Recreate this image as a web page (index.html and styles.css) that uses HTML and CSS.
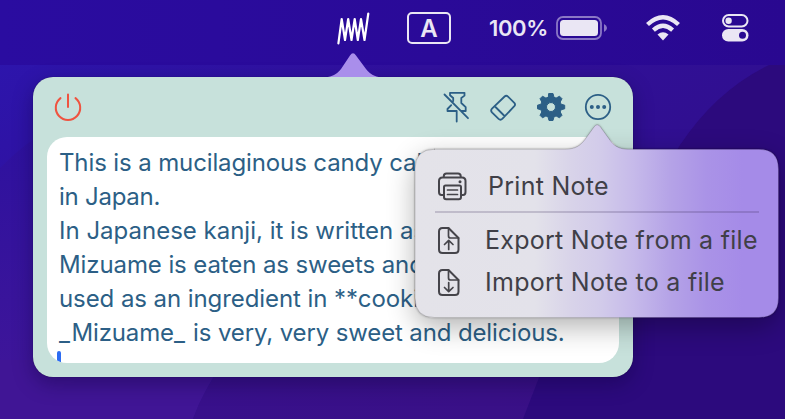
FILE: index.html
```html
<!DOCTYPE html>
<html lang="en">
<head>
<meta charset="utf-8">
<title>Mizuame</title>
<link rel="stylesheet" href="styles.css">
</head>
<body>
<svg class="wallpaper" viewBox="0 0 785 419" preserveAspectRatio="none">
  <defs>
    <linearGradient id="base" x1="0" y1="0" x2="1" y2="1"><stop offset="0" stop-color="#2c16b0"/><stop offset=".35" stop-color="#30109c"/><stop offset=".6" stop-color="#300f90"/><stop offset="1" stop-color="#2a087a"/></linearGradient>
    <linearGradient id="low" x1="0" y1="0" x2="0" y2="1"><stop offset="0" stop-color="#2d119f"/><stop offset="1" stop-color="#411698"/></linearGradient>
    <linearGradient id="dark" x1="0" y1="0" x2="1" y2="0"><stop offset="0" stop-color="#38108b"/><stop offset="1" stop-color="#3a1083"/></linearGradient>
  </defs>
  <rect width="785" height="419" fill="url(#base)"/>
  <path d="M0 168Q22 145 55 125V419H0Z" fill="url(#low)"/>
  <path d="M0 360H225Q206 385 193 419H0Z" fill="#401595"/>
  <path d="M220 370H785V419H193Q203 390 220 370Z" fill="url(#dark)"/>
  <path d="M785 58Q722 82 680 145Q620 245 540 375L523 419H785Z" fill="#2c0a7d"/>
</svg>
<header class="menubar">
  <svg class="mark" viewBox="336 11 34 34"><path d="M338.4 43.3 341.7 19 345 40 348.2 19 351.5 40 354.7 19 357.8 40 361 19 364.5 40 368.3 13.5"/></svg>
  <span class="input">A</span>
  <span class="percent">100%</span>
  <svg class="battery" viewBox="556 15 52 26"><rect x="557" y="17" width="44" height="22" rx="6" class="shell"/><rect x="560" y="20" width="38" height="16" rx="3.5" class="fill"/><path d="M604 24Q607 25.5 607 28T604 32Z" class="nub"/></svg>
  <svg class="wifi" viewBox="645 14 36 28"><path d="M647.500 24.500Q663 10 678.500 24.500M653.400 30.200Q663 21.500 672.600 30.200" /><path class="dot" d="M657.500 34.500Q663 30 668.500 34.500L663 40.500Z"/></svg>
  <svg class="control" viewBox="722 14 27 28"><rect x="723" y="15" width="24.500" height="11.500" rx="5.750" class="ring"/><circle cx="728.600" cy="20.800" r="3.200" class="fill"/><rect x="722" y="29" width="26.500" height="12.500" rx="6.250" class="fill"/><circle cx="742.500" cy="35.300" r="3.500" class="hole"/></svg>
</header>
<main class="note">
  <svg class="pointer" viewBox="323 53 60 25"><path d="M323 77.500C333 77 337 74 341 69L350 55.500Q353 51 356 55.500L366 69C370 74 374 77 383 77.500V78H323Z"/></svg>
  <div class="toolbar">
    <svg class="power" viewBox="54 93 28 28"><path d="M60.500 98.100A12.200 12.200 0 1 0 75.500 98.100M68 94.500V107"/></svg>
    <div class="tools">
      <svg class="tool" viewBox="442 91 30 32"><path d="M450 92.800H464.500V95.600L461.300 98V103L465.700 107.200V111H461M450 92.800V95.200L453.200 98V101M451.200 105.200 447.500 109V111H456.700M456.700 111V121.500M444.500 94.500 468 118.200"/></svg>
      <svg class="tool" viewBox="489 92 30 30"><path d="M492 108.600 504.600 96.500Q506.300 95 508 96.600L514.300 102.900Q515.800 104.500 514.300 106.200L502.500 118.700Q500.500 120.700 498.600 118.900L492.200 112.600Q490.200 110.500 492 108.600ZM495 106.500 504.500 116"/></svg>
      <svg class="tool gear" viewBox="536 93 30 30"><path fill-rule="evenodd" d="M549 94.500H553L554 98.300L556.100 99.100L559.500 97.200L562 99.700L560.200 103L561 105.200L564.700 106.200V109.800L561 110.800L560.200 113L562 116.300L559.500 118.800L556.100 117L554 117.800L553 121.500H549L548 117.800L545.900 117L542.500 118.800L540 116.300L541.800 113L541 110.800L537.500 109.800V106.200L541 105.200L541.800 103L540 99.700L542.500 97.200L545.900 99.100L548 98.300ZM551 103.500A4.500 4.500 0 1 0 551 112.500A4.500 4.500 0 1 0 551 103.500Z"/></svg>
      <svg class="tool" viewBox="583 92 30 30"><circle cx="598" cy="107" r="12.200"/><g class="dots"><circle cx="591.800" cy="107" r="2"/><circle cx="598" cy="107" r="2"/><circle cx="604.200" cy="107" r="2"/></g></svg>
    </div>
  </div>
  <div class="editor">
    <p class="l1">This is a mucilaginous candy cal</p>
    <p class="l2">in Japan.</p>
    <p class="l3">In Japanese kanji, it is written as</p>
    <p class="l4">Mizuame is eaten as sweets and</p>
    <p class="l5">used as an ingredient in **cooki</p>
    <p class="l6"><span class="rule">_</span>Mizuame<span class="rule">_</span> is very, very sweet and delicious.</p>
    <span class="caret"></span>
  </div>
</main>
<aside class="popover">
  <svg class="bubble" viewBox="415 124 364 194">
    <defs><linearGradient id="glass" gradientUnits="userSpaceOnUse" x1="415" y1="0" x2="779" y2="0"><stop offset="0" stop-color="#e4e3e9"/><stop offset=".33" stop-color="#e3e2ea"/><stop offset=".43" stop-color="#d8d3e9"/><stop offset=".51" stop-color="#d2cbea"/><stop offset=".6" stop-color="#c6baea"/><stop offset=".7" stop-color="#b5a3e7"/><stop offset=".8" stop-color="#aa93e7"/><stop offset=".9" stop-color="#a58be8"/><stop offset="1" stop-color="#a58be8"/></linearGradient></defs>
    <path d="M434.500 149.200H565C575 149.200 580 146 585 139.500L594 127Q597.200 122.500 600.500 127L609.500 139.500C614 146 619 149.200 628 149.200H759Q778.500 149.200 778.500 169V298Q778.500 317.500 759 317.500H434.500Q415 317.500 415 298V169Q415 149.200 434.500 149.200Z"/>
  </svg>
  <div class="item print">
    <svg viewBox="437 170 30 31"><path d="M443 194H441.500Q439 194 439 191V180Q439 176.500 442.500 176.500H462Q465.500 176.500 465.500 180V191Q465.500 194 463 194H461.300M443.800 176V175Q443.800 172.500 446.500 172.500H458Q460.700 172.500 460.700 175V176M445.500 184.500H459.500Q461 184.500 461 186V196Q461 198.200 458.800 198.200H446.200Q444 198.200 444 196V186Q444 184.500 445.500 184.500Z"/><path class="thin" d="M447.500 189H457.500M447.500 193.500H457.500"/><circle cx="460" cy="180.700" r="1.500"/></svg>
    <span>Print Note</span>
  </div>
  <hr>
  <div class="item export">
    <svg viewBox="437 225 30 30"><path d="M442.500 227H448.500L458.500 237V248.500Q458.500 252 455 252H442.500Q439 252 439 248.500V230.500Q439 227 442.500 227Z"/><path class="thin" d="M448.500 227V235Q448.500 237 450.500 237H458.500M448.700 248.500V239.500M444.500 243.500 448.700 239.300 453 243.500"/></svg>
    <span>Export Note from a file</span>
  </div>
  <div class="item import">
    <svg viewBox="437 267 30 30"><path d="M442.500 269H448.500L458.500 279V290.500Q458.500 294 455 294H442.500Q439 294 439 290.500V272.500Q439 269 442.500 269Z"/><path class="thin" d="M448.500 269V277Q448.500 279 450.500 279H458.500M448.700 281.500V290.500M444.500 286.500 448.700 290.700 453 286.500"/></svg>
    <span>Import Note to a file</span>
  </div>
</aside>
</body>
</html>
```
FILE: styles.css
```css
* { box-sizing: border-box; }
body { margin: 0; width: 785px; height: 419px; position: relative; overflow: hidden; background: #300e86; font-family: Inter, "Liberation Sans", sans-serif; }
svg { display: block; flex: none; fill: none; stroke-linecap: round; stroke-linejoin: round; }
p { margin: 0; }
.wallpaper { position: absolute; inset: 0; width: 785px; height: 419px; }
.menubar { position: relative; display: flex; height: 65px; padding: 11px 0 0 336px; align-items: flex-start; color: #eae6f4; background: linear-gradient(90deg, #2a0ca0, #2a0a98 55%, #290890); }
.mark { width: 34px; height: 34px; stroke: #fff; stroke-width: 2.2; }
.input { width: 44px; height: 32px; margin: 1px 0 0 37px; border: 2px solid #eae6f4; border-radius: 5px; font-size: 24px; font-weight: 600; line-height: 29px; text-align: center; }
.percent { width: 60px; margin: 4px 0 0 38px; font-size: 22px; font-weight: 600; line-height: 27px; letter-spacing: -.4px; white-space: nowrap; }
.battery { width: 52px; height: 26px; margin: 4px 0 0 7px; }
.shell { stroke: #8b78c6; stroke-width: 1.8; }
.fill { fill: #eae6f4; }
.nub { fill: #8b78c6; }
.wifi { width: 36px; height: 28px; margin: 3px 0 0 37px; stroke: #eae6f4; stroke-width: 4.3; stroke-linecap: butt; }
.dot { fill: #eae6f4; stroke: none; }
.control { width: 27px; height: 28px; margin: 3px 0 0 41px; }
.ring { stroke: #eae6f4; stroke-width: 2; }
.hole { fill: #290a92; }
.note { position: relative; width: 600px; height: 300px; margin: 12px 0 0 33px; padding: 0 14px 14px; border-radius: 20px; background: #c7e1db; box-shadow: 0 0 1px #0008, 0 7px 20px #10033c66; }
.pointer { position: absolute; left: 290px; top: -24px; width: 60px; height: 25px; fill: #a98eeb; clip-path: inset(0 0 1px); }
.toolbar { display: flex; justify-content: space-between; height: 60px; padding: 14px 6px 0 7px; }
.power { width: 28px; height: 28px; margin-top: 2px; stroke: #ef5340; stroke-width: 2; }
.tools { display: flex; gap: 17px; }
.tool { width: 30px; height: 32px; stroke: #2c5f86; stroke-width: 1.8; }
.gear { fill: #2c5f86; stroke-width: 1; }
.dots { fill: #2c5f86; stroke: none; }
.editor { height: 226px; padding: 9px 12px 0; border-radius: 20px; background: #fff; color: #2c5f86; font-size: 24px; line-height: 34px; white-space: nowrap; overflow: hidden; }
.l1 { letter-spacing: -.12px; }
.l2 { letter-spacing: -.25px; }
.l4 { letter-spacing: -.1px; }
.l5 { letter-spacing: -.08px; }
.l6 { letter-spacing: -.13px; }
.rule { letter-spacing: 1.5px; }
.caret { display: block; width: 4px; height: 14px; margin: 1px 0 0 -2px; border-radius: 2px 2px 0 0; background: #2d6cf2; }
.popover { position: absolute; left: 415px; top: 149px; width: 364px; height: 169px; padding: 22px 20px 0; border-radius: 20px; color: #403f47; font-size: 25px; letter-spacing: .27px; box-shadow: 0 9px 28px #0000004d; }
.bubble { position: absolute; left: 0; top: -25px; width: 364px; height: 194px; overflow: visible; fill: url(#glass); stroke: #0003; stroke-width: .8; filter: drop-shadow(0 0 1px #0005); }
.item { position: relative; display: flex; height: 31px; align-items: center; white-space: nowrap; }
.item svg { width: 30px; height: 31px; margin: 0 21px 0 2px; stroke: #45444a; stroke-width: 2; }
.item circle { fill: #45444a; stroke: none; }
.item .thin { stroke-width: 1.7; }
.item span { line-height: 31px; }
hr { position: relative; width: 324px; height: 2px; margin: 9px 0 12px; border: 0; background: #32215033; }
.export svg, .import svg { height: 30px; margin-right: 18px; }
.import { margin-top: 11px; }
```
